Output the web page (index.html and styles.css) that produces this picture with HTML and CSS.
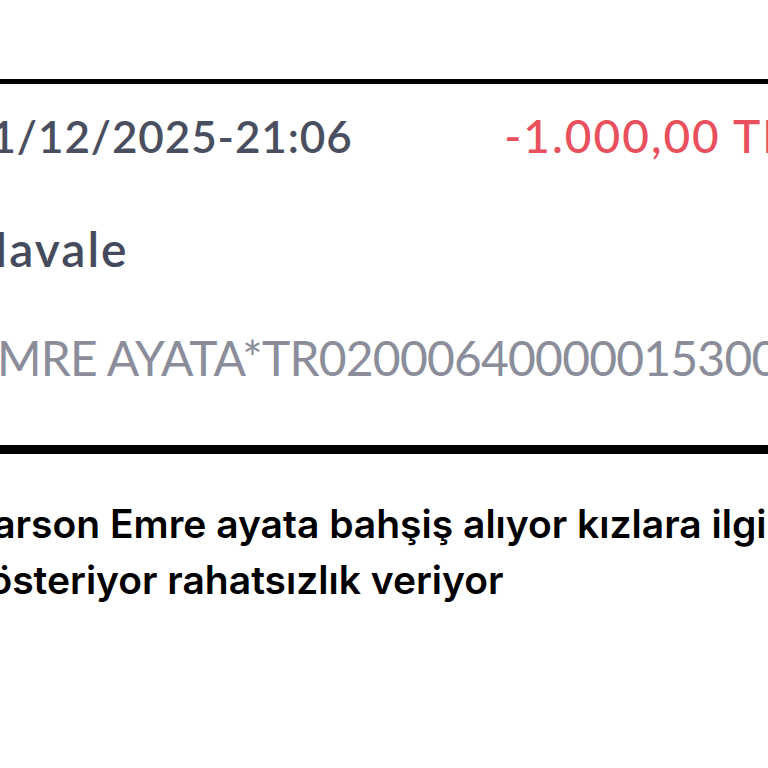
FILE: index.html
```html
<!doctype html>
<html lang="tr">
    <head>
        <meta charset="UTF-8" />
        <meta name="viewport" content="width=device-width, initial-scale=1.0" />
        <title>Hesap Hareketi</title>
        <link rel="stylesheet" href="styles.css">
    </head>
    <body>
        <main class="sheet">
            <section class="receipt">
                <div class="row">
                    <span class="date">21/12/2025-21:06</span>
                    <span class="amount">-1.000,00 TL</span>
                </div>
                <div class="type">Havale</div>
                <div class="desc">EMRE AYATA*TR020006400000153000000000</div>
            </section>

            <p class="note">
                Garson Emre ayata bahşiş alıyor kızlara ilgi gösteriyor rahatsızlık veriyor
            </p>
        </main>
    </body>
</html>
```

FILE: styles.css
```css
body,
html {
    margin: 0;
    padding: 0;
    background: #fff;
    overflow: hidden;
}

.sheet {
    width: 824px;
    margin-left: -36px;
}

.receipt {
    margin-top: 79px;
    border-top: 5px solid #000;
    border-bottom: 9px solid #000;
    padding: 24px 0 59px;
    font-family: Lato, "Liberation Sans", sans-serif;
}

.row {
    display: flex;
    justify-content: space-between;
    align-items: baseline;
    white-space: nowrap;
}

.date {
    font-size: 44px;
    font-weight: 600;
    letter-spacing: 0.9px;
    color: #4a4f5f;
}

.amount {
    font-size: 46px;
    font-weight: 500;
    letter-spacing: 2px;
    color: #e9505d;
}

.type {
    margin-top: 57px;
    padding-left: 7px;
    font-size: 48px;
    font-weight: 600;
    letter-spacing: 2px;
    color: #454b5c;
}

.desc {
    margin-top: 52px;
    padding-left: 6px;
    font-size: 48px;
    letter-spacing: -0.8px;
    color: #8b8e9a;
    white-space: nowrap;
}

.note {
    margin: 42px 0 0;
    width: 820px;
    font-family: Inter, "Liberation Sans", sans-serif;
    font-size: 39px;
    font-weight: 600;
    line-height: 56px;
    color: #000;
}
```
